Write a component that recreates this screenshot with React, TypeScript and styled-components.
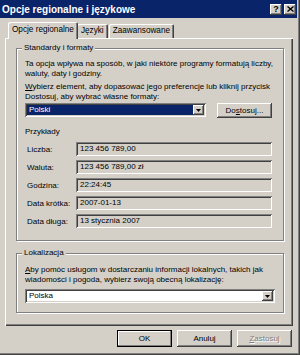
import React from 'react'
import styled, { createGlobalStyle, css } from 'styled-components'

const face = '#d4d0c8'
const navy = '#0a246a'

const GlobalStyle = createGlobalStyle`
  html, body {
    margin: 0;
    padding: 0;
    background: ${face};
  }
  body {
    font-family: "Liberation Sans", Arial, sans-serif;
    font-size: 8px;
    color: #000;
  }
`

const raised = css`
  box-shadow: inset -1px -1px #404040, inset 1px 1px #fff, inset -2px -2px #808080, inset 2px 2px ${face};
`

const sunken = css`
  box-shadow: inset 1px 1px #808080, inset -1px -1px #fff, inset 2px 2px #404040, inset -2px -2px ${face};
`

export default function App() {
  return (
    <>
      <GlobalStyle />
      <Window>
        <TitleBar>
          <Title>Opcje regionalne i językowe</Title>
          <CaptionButton>?</CaptionButton>
          <CaptionButton $gap>
            <svg width="7" height="6" viewBox="0 0 7 6">
              <path d="M0.5 0.5 L6.5 5.5 M6.5 0.5 L0.5 5.5" stroke="#000" strokeWidth="1.4" />
            </svg>
          </CaptionButton>
        </TitleBar>

        <Body>
          <TabStrip>
            <Tab $active>Opcje regionalne</Tab>
            <Tab>Języki</Tab>
            <Tab>Zaawansowane</Tab>
          </TabStrip>

          <Panel>
            <Group $height={193}>
              <Legend>Standardy i formaty</Legend>
              <Desc $top={10}>
                Ta opcja wpływa na sposób, w jaki niektóre programy formatują liczby,<br />
                waluty, daty i godziny.
              </Desc>
              <Desc $top={3}>
                <u>W</u>ybierz element, aby dopasować jego preferencje lub kliknij przycisk<br />
                Dostosuj, aby wybrać własne formaty:
              </Desc>
              <SelectRow>
                <Select $width={181}>
                  <Selected>Polski</Selected>
                  <DropButton><Arrow /></DropButton>
                </Select>
                <Button $width={55} $height={15}>Do<u>s</u>tosuj...</Button>
              </SelectRow>

              <SubTitle>Przykłady</SubTitle>
              <Samples>
                <SampleRow>
                  <SampleLabel>Liczba:</SampleLabel>
                  <Field>123 456 789,00</Field>
                </SampleRow>
                <SampleRow>
                  <SampleLabel>Waluta:</SampleLabel>
                  <Field>123 456 789,00 zł</Field>
                </SampleRow>
                <SampleRow>
                  <SampleLabel>Godzina:</SampleLabel>
                  <Field>22:24:45</Field>
                </SampleRow>
                <SampleRow>
                  <SampleLabel>Data krótka:</SampleLabel>
                  <Field>2007-01-13</Field>
                </SampleRow>
                <SampleRow>
                  <SampleLabel>Data długa:</SampleLabel>
                  <Field>13 stycznia 2007</Field>
                </SampleRow>
              </Samples>
            </Group>

            <Group $height={60} $top={12}>
              <Legend>Lokalizacja</Legend>
              <Desc $top={11}>
                <u>A</u>by pomóc usługom w dostarczaniu informacji lokalnych, takich jak<br />
                wiadomości i pogoda, wybierz swoją obecną lokalizację:
              </Desc>
              <Select $width={250} $top={4}>
                <SelectText>Polska</SelectText>
                <DropButton><Arrow /></DropButton>
              </Select>
            </Group>
          </Panel>

          <ButtonRow>
            <Button $width={55} $height={17} $default>OK</Button>
            <Button $width={55} $height={17}>Anuluj</Button>
            <Button $width={55} $height={17} $disabled><u>Z</u>astosuj</Button>
          </ButtonRow>
        </Body>
      </Window>
    </>
  )
}

function Arrow() {
  return (
    <svg width="5" height="3" viewBox="0 0 5 3">
      <polygon points="0,0 5,0 2.5,3" fill="#000" />
    </svg>
  )
}

const Window = styled.div`
  width: 300px;
  height: 355px;
  box-sizing: border-box;
  padding: 0 3px 3px 0;
  background: ${face};
  box-shadow: inset -1px -1px #404040, inset -2px -2px #808080;
  display: flex;
  flex-direction: column;
`

const TitleBar = styled.div`
  height: 18px;
  background: ${navy};
  display: flex;
  align-items: center;
  padding: 0 1px 0 2px;
`

const Title = styled.div`
  flex: 1;
  color: #fff;
  font-weight: bold;
  font-size: 10px;
  white-space: nowrap;
`

const CaptionButton = styled.div<{ $gap?: boolean }>`
  width: 12px;
  height: 11px;
  margin-left: ${p => (p.$gap ? 2 : 0)}px;
  background: ${face};
  ${raised}
  display: flex;
  align-items: center;
  justify-content: center;
  font-weight: bold;
  font-size: 9px;
  line-height: 11px;
`

const Body = styled.div`
  flex: 1;
  display: flex;
  flex-direction: column;
  padding: 4px 4px 0 5px;
`

const TabStrip = styled.div`
  height: 16px;
  display: flex;
  align-items: flex-end;
  padding-left: 3px;
`

const Tab = styled.div<{ $active?: boolean }>`
  position: relative;
  box-sizing: border-box;
  height: ${p => (p.$active ? 17 : 14)}px;
  margin-bottom: ${p => (p.$active ? -1 : 0)}px;
  padding: 0 4px;
  margin-right: ${p => (p.$active ? -1 : 1)}px;
  z-index: ${p => (p.$active ? 1 : 0)};
  background: ${face};
  border-radius: 2px 2px 0 0;
  box-shadow: inset 1px 1px #fff, inset -1px 0 #404040, inset -2px 0 #808080;
  display: flex;
  align-items: ${p => (p.$active ? 'flex-start' : 'center')};
  padding-top: ${p => (p.$active ? 3 : 0)}px;
  white-space: nowrap;
  line-height: 10px;
  font-size: 8.2px;
`

const Panel = styled.div`
  height: 288px;
  box-sizing: border-box;
  padding: 10px 9px 0 11px;
  box-shadow: inset 1px 1px #fff, inset -1px -1px #404040, inset -2px -2px #808080;
`

const Group = styled.div<{ $height: number; $top?: number }>`
  position: relative;
  width: 268px;
  height: ${p => p.$height}px;
  margin-top: ${p => p.$top ?? 0}px;
  box-sizing: border-box;
  border: 1px solid #808080;
  box-shadow: 1px 1px 0 #fff, inset 1px 1px 0 #fff;
  padding: 0 8px;
`

const Legend = styled.span`
  position: absolute;
  top: -6px;
  left: 5px;
  padding: 0 2px;
  background: ${face};
  line-height: 10px;
  white-space: nowrap;
`

const Desc = styled.div<{ $top: number }>`
  margin-top: ${p => p.$top}px;
  line-height: 10px;
  white-space: nowrap;
`

const SelectRow = styled.div`
  height: 16px;
  display: flex;
  align-items: center;
  gap: 11px;
`

const Select = styled.div<{ $width: number; $top?: number }>`
  width: ${p => p.$width}px;
  height: 14px;
  margin-top: ${p => p.$top ?? 0}px;
  box-sizing: border-box;
  padding: 2px;
  background: #fff;
  ${sunken}
  display: flex;
`

const Selected = styled.div`
  flex: 1;
  background: ${navy};
  color: #fff;
  padding-left: 2px;
  line-height: 10px;
`

const SelectText = styled.div`
  flex: 1;
  padding-left: 2px;
  line-height: 10px;
`

const DropButton = styled.div`
  width: 11px;
  background: ${face};
  ${raised}
  display: flex;
  align-items: center;
  justify-content: center;
`

const Button = styled.div<{ $width: number; $height: number; $default?: boolean; $disabled?: boolean }>`
  width: ${p => p.$width}px;
  height: ${p => p.$height}px;
  box-sizing: border-box;
  background: ${face};
  display: flex;
  align-items: center;
  justify-content: center;
  white-space: nowrap;
  ${p =>
    p.$default
      ? css`
          box-shadow: inset 0 0 0 1px #000, inset -2px -2px #808080, inset 2px 2px #fff;
        `
      : raised}
  ${p =>
    p.$disabled &&
    css`
      color: #808080;
      text-shadow: 1px 1px #fff;
    `}
`

const SubTitle = styled.div`
  margin-top: 9px;
  line-height: 10px;
`

const Samples = styled.div`
  margin-top: 5px;
  display: flex;
  flex-direction: column;
  gap: 4px;
`

const SampleRow = styled.div`
  display: flex;
  align-items: center;
  padding-left: 2px;
  height: 14px;
`

const SampleLabel = styled.div`
  width: 49px;
  white-space: nowrap;
`

const Field = styled.div`
  width: 196px;
  height: 14px;
  box-sizing: border-box;
  padding-left: 4px;
  line-height: 14px;
  ${sunken}
`

const ButtonRow = styled.div`
  margin-top: 4px;
  padding-right: 1px;
  display: flex;
  justify-content: flex-end;
  gap: 5px;
`
